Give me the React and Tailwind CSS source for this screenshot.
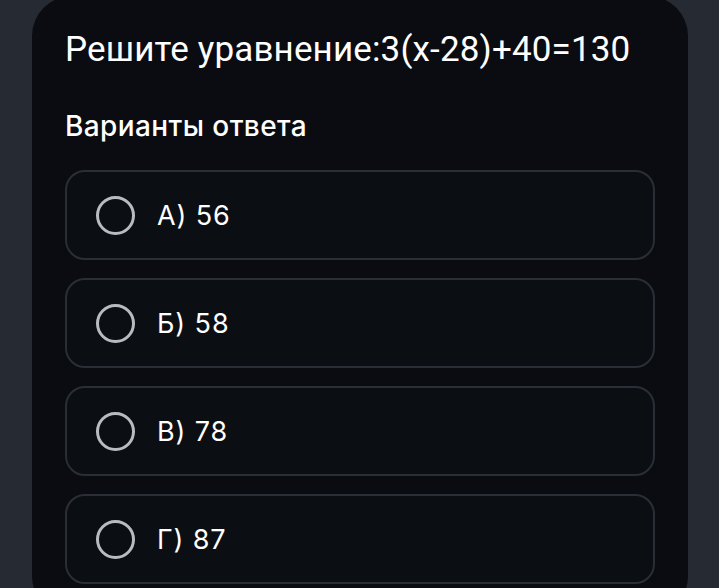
import React from 'react';

const OPTIONS = ['А) 56', 'Б) 58', 'В) 78', 'Г) 87'];

const Option = ({ label }) => (
  <div className="flex h-[90px] items-center gap-[22px] rounded-[20px] border-2 border-[#2a2e36] bg-[#0b0e13] pl-[29px]">
    <span className="h-[39px] w-[39px] shrink-0 rounded-full border-[3px] border-[#b8bbc1]" />
    <span className="font-['Inter',sans-serif] text-[27px] leading-none tracking-[0.9px] text-white">{label}</span>
  </div>
);

export default function App() {
  return (
    <div className="h-[588px] overflow-hidden bg-[#262a33] pl-[32px] pr-[31px]">
      <div className="-mt-[4px] min-h-[620px] rounded-[40px] bg-[#0a0c11] px-[33px] pt-[34px] text-white">
        <h1 className="font-['Roboto',sans-serif] text-[35px] leading-[40px] tracking-[0.15px]">Решите уравнение:3(x-28)+40=130</h1>
        <h2 className="mt-[39px] font-['Inter',sans-serif] text-[28px] font-medium leading-[34px] tracking-[0.4px]">Варианты ответа</h2>
        <div className="mt-[27px] flex flex-col gap-[18px]">
          {OPTIONS.map((o) => (
            <Option key={o} label={o} />
          ))}
        </div>
      </div>
    </div>
  );
}
